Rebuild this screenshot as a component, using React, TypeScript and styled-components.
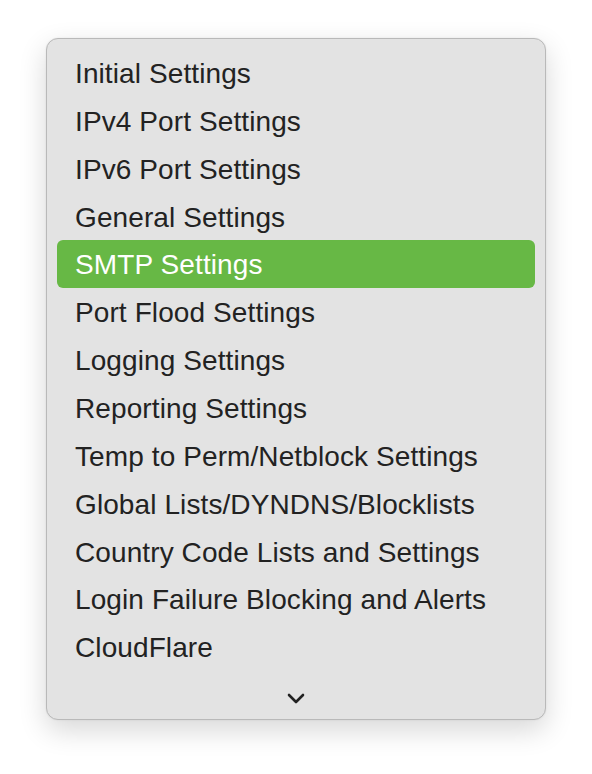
import React from 'react';
import styled, { createGlobalStyle } from 'styled-components';

const GlobalStyle = createGlobalStyle`
  html, body {
    margin: 0;
    padding: 0;
    background: #ffffff;
  }
  body {
    font-family: "Liberation Sans", Arial, Helvetica, sans-serif;
  }
`;

const Page = styled.div`
  width: 592px;
  height: 774px;
  box-sizing: border-box;
  padding: 38px 0 0 46px;
`;

const Menu = styled.div`
  width: 500px;
  height: 682px;
  box-sizing: border-box;
  padding: 10px 10px 0 10px;
  background: #e3e3e3;
  border: 1px solid #b9b9b9;
  border-radius: 12px;
  box-shadow: 0 10px 28px rgba(0, 0, 0, 0.16), 0 0 2px rgba(0, 0, 0, 0.08);
  display: flex;
  flex-direction: column;
`;

const Item = styled.div<{ $active?: boolean }>`
  height: 48px;
  box-sizing: border-box;
  padding: 2px 0 0 18px;
  display: flex;
  align-items: center;
  border-radius: 6px;
  font-family: "Liberation Sans", Arial, sans-serif;
  font-size: 28px;
  letter-spacing: 0.1px;
  color: ${(p) => (p.$active ? '#ffffff' : '#222222')};
  background: ${(p) => (p.$active ? '#67b845' : 'transparent')};
`;

const More = styled.div`
  height: 48px;
  box-sizing: border-box;
  padding-top: 6px;
  display: flex;
  align-items: center;
  justify-content: center;
  color: #222222;
`;

const items = [
  'Initial Settings',
  'IPv4 Port Settings',
  'IPv6 Port Settings',
  'General Settings',
  'SMTP Settings',
  'Port Flood Settings',
  'Logging Settings',
  'Reporting Settings',
  'Temp to Perm/Netblock Settings',
  'Global Lists/DYNDNS/Blocklists',
  'Country Code Lists and Settings',
  'Login Failure Blocking and Alerts',
  'CloudFlare',
];

export default function App() {
  return (
    <Page>
      <GlobalStyle />
      <Menu>
        {items.map((label) => (
          <Item key={label} $active={label === 'SMTP Settings'}>
            {label}
          </Item>
        ))}
        <More>
          <svg width="18" height="11" viewBox="0 0 18 11" fill="none">
            <path d="M2 2l7 7 7-7" stroke="currentColor" strokeWidth="2.6" strokeLinecap="round" strokeLinejoin="round" />
          </svg>
        </More>
      </Menu>
    </Page>
  );
}
